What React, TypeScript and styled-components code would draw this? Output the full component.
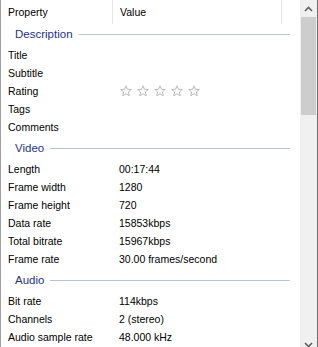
import { styled, createGlobalStyle } from "styled-components";

const GlobalStyle = createGlobalStyle`
  html, body {
    margin: 0;
    padding: 0;
    overflow: hidden;
    background: #ffffff;
  }
  body {
    font-family: "Liberation Sans", Arial, sans-serif;
    font-size: 10.5px;
    color: #000000;
  }
`;

const Frame = styled.div`
  display: flex;
  width: 318px;
  height: 353px;
  box-sizing: border-box;
  border-left: 1px solid #a0a0a0;
  border-right: 1px solid #6e6e6e;
  overflow: hidden;
`;

const List = styled.div`
  display: flex;
  flex-direction: column;
  flex: 1;
  min-width: 0;
`;

const Header = styled.div`
  display: grid;
  grid-template-columns: 112px 169px 1fr;
  height: 22px;
  flex-shrink: 0;
`;

const HeaderCell = styled.div<{ $last?: boolean }>`
  display: flex;
  align-items: center;
  padding-left: ${(p) => (p.$last ? "0" : "7px")};
  border-right: ${(p) => (p.$last ? "none" : "1px solid #e5e5e5")};
  height: 24px;
  box-sizing: border-box;
`;

const GroupRow = styled.div`
  display: flex;
  align-items: center;
  gap: 6px;
  height: 24px;
  padding: 0 10px 0 14px;
  flex-shrink: 0;
`;

const GroupTitle = styled.span`
  color: #1e3287;
  font-size: 11.5px;
`;

const GroupLine = styled.div`
  flex: 1;
  height: 1px;
  background: #b9c6d1;
`;

const Row = styled.div`
  display: grid;
  grid-template-columns: 111px 1fr;
  align-items: center;
  height: 18px;
  flex-shrink: 0;
`;

const Label = styled.span`
  padding-left: 7px;
  white-space: nowrap;
`;

const Value = styled.span`
  padding-left: 7px;
  white-space: nowrap;
  display: flex;
  align-items: center;
`;

const Stars = styled.div`
  display: flex;
  gap: 5px;
  padding-left: 1px;
`;

const Scrollbar = styled.div`
  display: flex;
  flex-direction: column;
  width: 17px;
  flex-shrink: 0;
  background: #f0f0f0;
`;

const ArrowButton = styled.div`
  display: flex;
  align-items: center;
  justify-content: center;
  height: 17px;
  flex-shrink: 0;
`;

const Thumb = styled.div`
  height: 98px;
  margin: 0 1px;
  background: #cdcdcd;
`;

const Track = styled.div`
  flex: 1;
`;

function Star() {
  return (
    <svg width="12" height="12" viewBox="0 0 12 12">
      <path
        d="M6 0.8 L7.5 4.3 L11.3 4.5 L8.4 7 L9.3 10.8 L6 8.8 L2.7 10.8 L3.6 7 L0.7 4.5 L4.5 4.3 Z"
        fill="#fafafa"
        stroke="#b4b4b4"
        strokeWidth="0.9"
        strokeLinejoin="round"
      />
    </svg>
  );
}

function Chevron({ down }: { down?: boolean }) {
  return (
    <svg width="9" height="6" viewBox="0 0 9 6">
      <path
        d={down ? "M1 1 L4.5 4.5 L8 1" : "M1 5 L4.5 1.5 L8 5"}
        fill="none"
        stroke="#606060"
        strokeWidth="1.6"
      />
    </svg>
  );
}

type Prop = { label: string; value?: string; stars?: boolean };

const groups: { title: string; rows: Prop[] }[] = [
  {
    title: "Description",
    rows: [
      { label: "Title" },
      { label: "Subtitle" },
      { label: "Rating", stars: true },
      { label: "Tags" },
      { label: "Comments" },
    ],
  },
  {
    title: "Video",
    rows: [
      { label: "Length", value: "00:17:44" },
      { label: "Frame width", value: "1280" },
      { label: "Frame height", value: "720" },
      { label: "Data rate", value: "15853kbps" },
      { label: "Total bitrate", value: "15967kbps" },
      { label: "Frame rate", value: "30.00 frames/second" },
    ],
  },
  {
    title: "Audio",
    rows: [
      { label: "Bit rate", value: "114kbps" },
      { label: "Channels", value: "2 (stereo)" },
      { label: "Audio sample rate", value: "48.000 kHz" },
    ],
  },
];

export default function App() {
  return (
    <>
      <GlobalStyle />
      <Frame>
        <List>
          <Header>
            <HeaderCell>Property</HeaderCell>
            <HeaderCell>Value</HeaderCell>
            <HeaderCell $last />
          </Header>
          {groups.map((g) => (
            <div key={g.title}>
              <GroupRow>
                <GroupTitle>{g.title}</GroupTitle>
                <GroupLine />
              </GroupRow>
              {g.rows.map((r) => (
                <Row key={r.label}>
                  <Label>{r.label}</Label>
                  <Value>
                    {r.stars ? (
                      <Stars>
                        {[0, 1, 2, 3, 4].map((i) => (
                          <Star key={i} />
                        ))}
                      </Stars>
                    ) : (
                      r.value
                    )}
                  </Value>
                </Row>
              ))}
            </div>
          ))}
        </List>
        <Scrollbar>
          <ArrowButton>
            <Chevron />
          </ArrowButton>
          <Thumb />
          <Track />
          <ArrowButton>
            <Chevron down />
          </ArrowButton>
        </Scrollbar>
      </Frame>
    </>
  );
}
